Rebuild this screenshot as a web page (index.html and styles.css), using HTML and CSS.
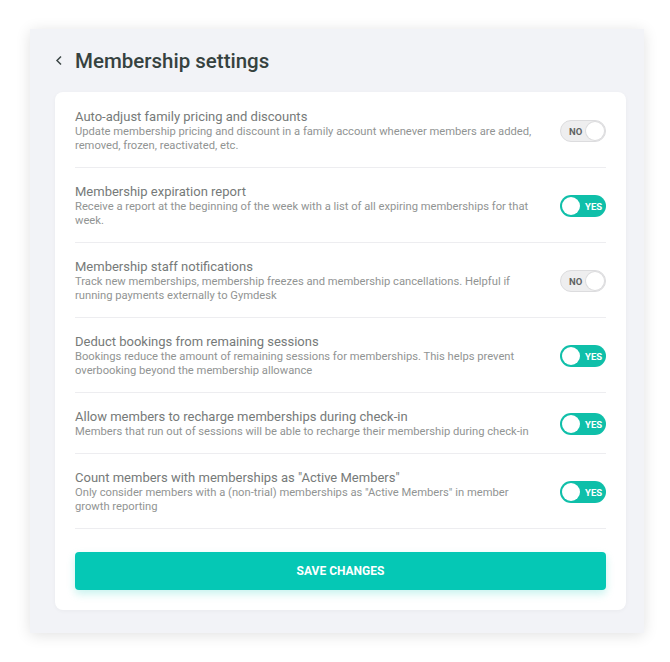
FILE: index.html
```html
<!DOCTYPE html>
<html lang="en">
<head>
<meta charset="utf-8">
<title>Membership settings</title>
<link rel="stylesheet" href="styles.css">
</head>
<body>
<div class="panel">
  <div class="header">
    <svg class="back" width="8" height="11" viewBox="0 0 8 11"><path d="M6 1.5 L2 5.5 L6 9.5" fill="none" stroke="#3c4645" stroke-width="1.5"/></svg>
    <h1>Membership settings</h1>
  </div>
  <div class="card">
    <div class="row">
      <div class="text">
        <div class="title">Auto-adjust family pricing and discounts</div>
        <div class="desc">Update membership pricing and discount in a family account whenever members are added, removed, frozen, reactivated, etc.</div>
      </div>
      <div class="toggle off"><span class="label">NO</span><span class="knob"></span></div>
    </div>
    <div class="row">
      <div class="text">
        <div class="title">Membership expiration report</div>
        <div class="desc">Receive a report at the beginning of the week with a list of all expiring memberships for that week.</div>
      </div>
      <div class="toggle on"><span class="knob"></span><span class="label">YES</span></div>
    </div>
    <div class="row">
      <div class="text">
        <div class="title">Membership staff notifications</div>
        <div class="desc">Track new memberships, membership freezes and membership cancellations. Helpful if running payments externally to Gymdesk</div>
      </div>
      <div class="toggle off"><span class="label">NO</span><span class="knob"></span></div>
    </div>
    <div class="row">
      <div class="text">
        <div class="title">Deduct bookings from remaining sessions</div>
        <div class="desc">Bookings reduce the amount of remaining sessions for memberships. This helps prevent overbooking beyond the membership allowance</div>
      </div>
      <div class="toggle on"><span class="knob"></span><span class="label">YES</span></div>
    </div>
    <div class="row">
      <div class="text">
        <div class="title">Allow members to recharge memberships during check-in</div>
        <div class="desc">Members that run out of sessions will be able to recharge their membership during check-in</div>
      </div>
      <div class="toggle on"><span class="knob"></span><span class="label">YES</span></div>
    </div>
    <div class="row">
      <div class="text">
        <div class="title">Count members with memberships as "Active Members"</div>
        <div class="desc">Only consider members with a (non-trial) memberships as "Active Members" in member growth reporting</div>
      </div>
      <div class="toggle on"><span class="knob"></span><span class="label">YES</span></div>
    </div>
    <button class="save">SAVE CHANGES</button>
  </div>
</div>
</body>
</html>
```
FILE: styles.css
```css
html, body {
  margin: 0;
  padding: 0;
  background: #ffffff;
}
body {
  font-family: Roboto, "Liberation Sans", Arial, sans-serif;
  padding: 29px 26px 29px 30px;
}
.panel {
  width: 614px;
  height: 604px;
  box-sizing: border-box;
  background: #f2f3f7;
  box-shadow: 0 2px 14px rgba(0, 0, 0, 0.12);
  padding: 0 18px 0 25px;
}
.header {
  display: flex;
  align-items: center;
  height: 63px;
}
.back {
  margin-right: 12px;
}
h1 {
  margin: 0;
  font-size: 20.5px;
  font-weight: 500;
  color: #36423f;
}
.card {
  background: #ffffff;
  border-radius: 8px;
  padding: 1px 20px 20px;
  box-shadow: 0 1px 4px rgba(0, 0, 0, 0.04);
}
.row {
  display: flex;
  align-items: center;
  justify-content: space-between;
  padding: 16px 0 14px;
  border-bottom: 1px solid #ededf0;
}
.text {
  flex: 1;
  padding-right: 16px;
}
.title {
  font-size: 13px;
  line-height: 16px;
  color: #767a79;
}
.desc {
  font-size: 11.2px;
  line-height: 14px;
  color: #919493;
}
.toggle {
  width: 46px;
  height: 22px;
  box-sizing: border-box;
  border-radius: 11px;
  display: flex;
  align-items: center;
  flex: none;
}
.toggle.off {
  background: #eeeeef;
  border: 1px solid #dcdcde;
  justify-content: space-between;
  padding: 0 1px 0 8px;
}
.toggle.on {
  background: #0fbfa9;
  padding: 0 0 0 2px;
}
.label {
  font-size: 9.5px;
  font-weight: 700;
}
.toggle.off .label {
  color: #5e6363;
}
.toggle.on .label {
  color: #ffffff;
  margin-left: 5px;
}
.knob {
  width: 18px;
  height: 18px;
  border-radius: 50%;
  background: #ffffff;
}
.toggle.off .knob {
  box-shadow: 0 0 0 1px #dcdcde;
}
.save {
  display: block;
  width: 100%;
  height: 38px;
  margin-top: 23px;
  border: none;
  border-radius: 4px;
  background: #05c8b5;
  color: #ffffff;
  font-family: Roboto, "Liberation Sans", Arial, sans-serif;
  font-size: 12px;
  font-weight: 700;
  box-shadow: 0 4px 8px rgba(5, 200, 181, 0.22);
}
```
